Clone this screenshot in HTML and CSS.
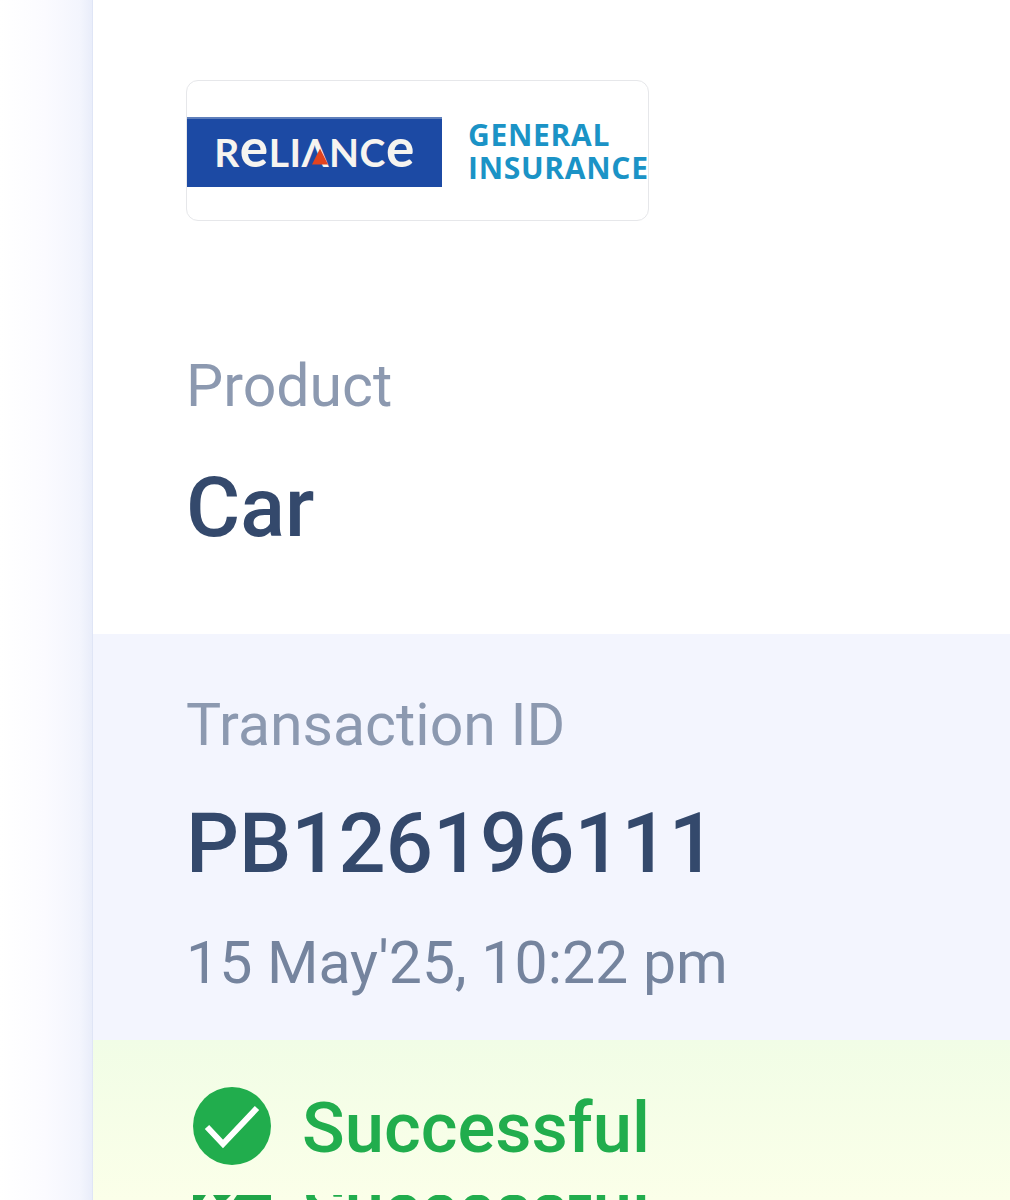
FILE: index.html

```html
<!DOCTYPE html>
<html lang="en">
<head>
  <meta charset="UTF-8">
  <title>Transaction</title>
  <link rel="stylesheet" href="styles.css">
</head>
<body>
  <div class="page">
    <div class="card">
      <div class="product-section">
        <div class="logo-box">
          <div class="logo-blue">
            <span class="logo-name">R<span class="logo-e">e</span>LI<span class="logo-a">Λ<svg class="logo-tri" viewBox="0 0 20 20"><polygon points="10,0 20,20 0,20" fill="#e2431e"/></svg></span>NC<span class="logo-e">e</span></span>
          </div>
          <div class="logo-text">
            <span>GENERAL</span>
            <span>INSURANCE</span>
          </div>
        </div>
        <div class="label product-label">Product</div>
        <div class="value">Car</div>
      </div>

      <div class="txn-section">
        <div class="label">Transaction ID</div>
        <div class="value txn-id">PB126196111</div>
        <div class="txn-date">15 May'25, 10:22 pm</div>
      </div>

      <div class="status-section">
        <div class="status-row">
          <svg class="status-icon" viewBox="0 0 78 78">
            <circle cx="39" cy="39" r="39" fill="#21ad4d"/>
            <path d="M14 40 L30 57 L64 21" fill="none" stroke="#fff" stroke-width="6"/>
          </svg>
          <span class="status-text">Successful</span>
        </div>
        <div class="status-row status-clipped">
          <svg class="status-icon" viewBox="0 0 78 78">
            <path d="M0 0 H13 L9 6 H0 Z M20 0 H38 L32 6 H24 Z M44 0 H78 V6 H40 Z" fill="#1fa548"/>
          </svg>
          <span class="status-text">Successful</span>
        </div>
      </div>
    </div>
  </div>
</body>
</html>
```

FILE: styles.css

```css
html, body {
  margin: 0;
  padding: 0;
  background: #fff;
}
body {
  font-family: Roboto, "Liberation Sans", sans-serif;
}
.page {
  height: 1200px;
  overflow: hidden;
  padding-left: 92px;
  background: linear-gradient(90deg, #fff 0, #fbfbff 45px, #f3f5fd 80px, #e9edfa 92px);
}
.card {
  background: #fff;
  height: 1200px;
  border-left: 1px solid #dfe5f6;
  box-sizing: border-box;
}
.product-section {
  height: 634px;
  box-sizing: border-box;
  padding: 80px 0 0 93px;
}
.logo-box {
  width: 463px;
  height: 141px;
  box-sizing: border-box;
  border: 1px solid #e6e7ea;
  border-radius: 12px;
  display: flex;
  align-items: center;
  background: #fff;
  overflow: hidden;
}
.logo-blue {
  width: 255px;
  height: 70px;
  margin-top: 2px;
  background: #1c4aa4;
  border-top: 2px solid #5f7fbb;
  box-sizing: border-box;
  display: flex;
  align-items: center;
  justify-content: center;
  flex-shrink: 0;
}
.logo-name {
  color: #f6f4f0;
  font-family: Lato, sans-serif;
  font-size: 39px;
  font-weight: 700;
  line-height: 1;
  letter-spacing: 0.5px;
}
.logo-e {
  font-size: 1.36em;
  line-height: 0;
}
.logo-a {
  position: relative;
  display: inline-block;
}
.logo-tri {
  position: absolute;
  left: 10px;
  bottom: 6px;
  width: 16px;
  height: 19px;
}
.logo-text {
  margin-left: 26px;
  display: flex;
  flex-direction: column;
  color: #1b93c6;
  font-family: "Open Sans", sans-serif;
  font-size: 30px;
  font-weight: 700;
  line-height: 33px;
  letter-spacing: 0.7px;
  white-space: nowrap;
}
.label {
  color: #8c99b0;
  font-size: 59px;
  font-weight: 400;
  line-height: 70px;
}
.product-label {
  margin-top: 130px;
}
.value {
  color: #34496c;
  font-size: 83px;
  font-weight: 500;
  line-height: 90px;
  margin-top: 42px;
}
.txn-section {
  height: 406px;
  box-sizing: border-box;
  padding: 56px 0 0 93px;
  background: #f3f5fe;
}
.txn-id {
  margin-top: 39px;
}
.txn-date {
  color: #75849e;
  font-size: 59px;
  font-weight: 400;
  line-height: 70px;
  margin-top: 39px;
}
.status-section {
  height: 160px;
  box-sizing: border-box;
  padding: 47px 0 0 100px;
  background: linear-gradient(180deg, #f1fde6, #fbffe9);
}
.status-row {
  display: flex;
  align-items: center;
  height: 78px;
}
.status-icon {
  width: 78px;
  height: 78px;
  flex-shrink: 0;
}
.status-text {
  margin-left: 31px;
  margin-top: 3px;
  color: #21ad4d;
  font-size: 70.5px;
  font-weight: 500;
  line-height: 78px;
}
.status-clipped {
  margin-top: 30px;
  height: 5px;
  overflow: hidden;
  align-items: flex-start;
}
.status-clipped .status-text {
  margin-top: -26px;
}
```
